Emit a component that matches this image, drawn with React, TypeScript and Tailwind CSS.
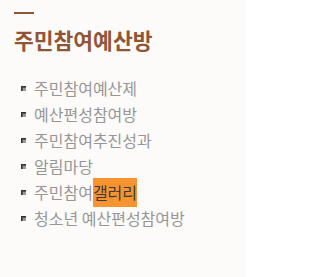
import React from "react";

const items: { text: string; hl?: string }[] = [
  { text: "주민참여예산제" },
  { text: "예산편성참여방" },
  { text: "주민참여추진성과" },
  { text: "알림마당" },
  { text: "주민참여", hl: "갤러리" },
  { text: "청소년 예산편성참여방" },
];

export default function App() {
  return (
    <div
      className="w-[246px] h-[277px] bg-[#fcfbfa] pt-[12px]"
      style={{ fontFamily: '"Noto Sans CJK KR", "Noto Sans", sans-serif' }}
    >
      <div className="ml-[14px] w-[20px] h-[2px] bg-[#8f5535]" />
      <h1 className="ml-[14px] mt-[12px] text-[21.5px] leading-[28px] font-bold text-[#8f5535]">
        주민참여예산방
      </h1>
      <ul className="mt-[21px] pl-[21px]">
        {items.map((it, i) => (
          <li key={i} className="flex items-center h-[26px]">
            <span className="w-[5px] h-[5px] bg-[#555] border-t border-l border-[#333] flex items-end justify-end">
              <span className="w-[3px] h-[3px] bg-[#9a9a9a]" />
            </span>
            <span className="ml-[8px] text-[16px] text-[#969696] leading-[26px] whitespace-nowrap flex items-center">
              {it.text}
              {it.hl && (
                <span className="bg-[#f7942f] text-[#3a3a3a] h-[29px] leading-[29px] inline-block">
                  {it.hl}
                </span>
              )}
            </span>
          </li>
        ))}
      </ul>
    </div>
  );
}
